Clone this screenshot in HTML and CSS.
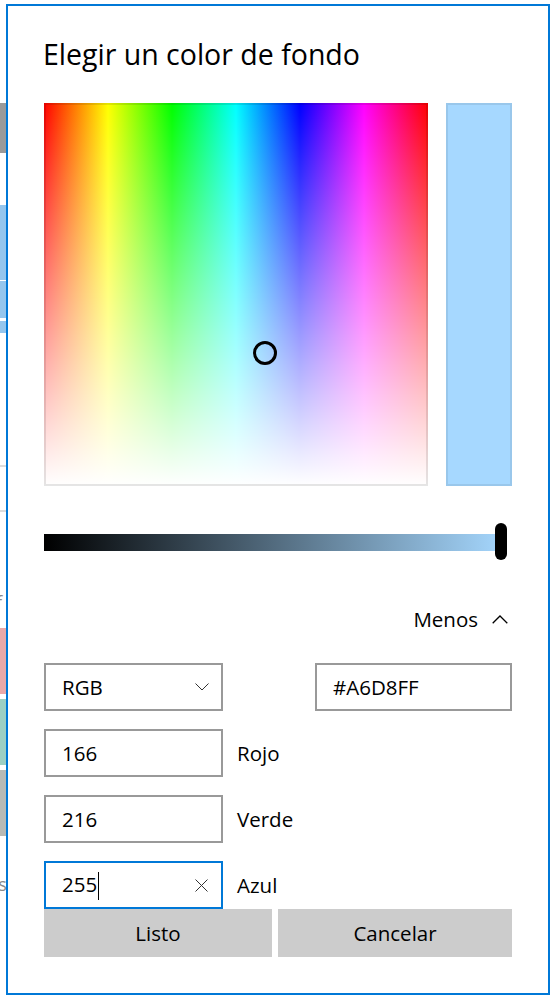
FILE: index.html
```html
<!DOCTYPE html>
<html lang="es">

<head>
  <meta charset="UTF-8" />
  <meta name="viewport" content="width=device-width, initial-scale=1.0" />
  <title>Elegir un color de fondo</title>
  <link rel="stylesheet" href="styles.css">
</head>

<body>
  <div class="screen">
    <!-- edge of the window behind the dialog -->
    <div class="behind">
      <div class="bg-block bg-gray"></div>
      <div class="bg-block bg-blue bg-blue-1"></div>
      <div class="bg-block bg-blue bg-blue-2"></div>
      <div class="bg-block bg-blue bg-blue-3"></div>
      <div class="bg-line bg-line-1"></div>
      <div class="bg-line bg-line-2"></div>
      <div class="bg-text bg-text-1">f</div>
      <div class="bg-block bg-pink"></div>
      <div class="bg-block bg-teal"></div>
      <div class="bg-block bg-stone"></div>
      <div class="bg-text bg-text-2">rs</div>
    </div>

    <div class="dialog">
      <h2 class="dialog-title">Elegir un color de fondo</h2>

      <div class="picker">
        <div class="spectrum">
          <span class="picker-ring"></span>
        </div>
        <div class="preview"></div>
      </div>

      <div class="slider">
        <div class="slider-track"></div>
        <span class="slider-thumb"></span>
      </div>

      <div class="more-row">
        <button class="toggle-btn" type="button">
          Menos
          <svg width="16" height="9" viewBox="0 0 16 9">
            <path d="M0.7 8.3 L8 1 L15.3 8.3" fill="none" stroke="#000" stroke-width="1.3" />
          </svg>
        </button>
      </div>

      <div class="fields">
        <div class="field-row split">
          <div class="box select-box">
            <span>RGB</span>
            <svg width="14" height="8" viewBox="0 0 14 8">
              <path d="M0.5 0.5 L7 7 L13.5 0.5" fill="none" stroke="#333" stroke-width="1" />
            </svg>
          </div>
          <div class="box hex-box"><span>#A6D8FF</span></div>
        </div>
        <div class="field-row">
          <div class="box"><span>166</span></div>
          <label class="field-label">Rojo</label>
        </div>
        <div class="field-row">
          <div class="box"><span>216</span></div>
          <label class="field-label">Verde</label>
        </div>
        <div class="field-row">
          <div class="box box-focus">
            <span>255<i class="caret"></i></span>
            <svg width="13" height="13" viewBox="0 0 13 13">
              <path d="M0.5 0.5 L12.5 12.5 M12.5 0.5 L0.5 12.5" fill="none" stroke="#333" stroke-width="1" />
            </svg>
          </div>
          <label class="field-label">Azul</label>
        </div>
      </div>

      <div class="actions">
        <button class="action-btn" type="button">Listo</button>
        <button class="action-btn" type="button">Cancelar</button>
      </div>
    </div>
  </div>
</body>

</html>
```

FILE: styles.css
```css
* {
  box-sizing: border-box;
}

body {
  margin: 0;
  background: #fff;
  font-family: "Segoe UI", "Open Sans", sans-serif;
  color: #000;
}

.screen {
  display: flex;
  align-items: flex-start;
  width: 558px;
  height: 1004px;
  overflow: hidden;
}

/* window behind */
.behind {
  display: flex;
  flex-direction: column;
  width: 6px;
  flex-shrink: 0;
  overflow: hidden;
}

.bg-block {
  width: 6px;
}

.bg-gray {
  margin-top: 103px;
  height: 50px;
  background: #9a9a9a;
}

.bg-blue {
  background: #94c6ee;
}

.bg-blue-1 {
  margin-top: 52px;
  height: 75px;
}

.bg-blue-2 {
  margin-top: 1px;
  height: 37px;
}

.bg-blue-3 {
  margin-top: 3px;
  height: 12px;
}

.bg-line {
  height: 2px;
  background: #dcdcdc;
}

.bg-line-1 {
  margin-top: 132px;
}

.bg-line-2 {
  margin-top: 43px;
}

.bg-text {
  height: 20px;
  font-size: 18px;
  line-height: 20px;
  color: #8a8a8a;
  white-space: nowrap;
}

.bg-text-1 {
  margin-top: 80px;
  text-indent: -4px;
}

.bg-text-2 {
  margin-top: 38px;
  text-indent: -9px;
}

.bg-pink {
  margin-top: 16px;
  height: 66px;
  background: #eaa9a9;
}

.bg-teal {
  margin-top: 5px;
  height: 66px;
  background: #9dd0c4;
}

.bg-stone {
  margin-top: 5px;
  height: 66px;
  background: #b7bab6;
}

/* dialog */
.dialog {
  margin-top: 4px;
  width: 544px;
  height: 991px;
  border: 2px solid #0078d7;
  background: #fff;
  padding: 29px 36px 0;
  display: flex;
  flex-direction: column;
}

.dialog-title {
  margin: 0 0 30px -1px;
  font-size: 28.5px;
  font-weight: 400;
  line-height: 38px;
}

.picker {
  display: flex;
  gap: 18px;
}

.spectrum {
  position: relative;
  width: 384px;
  height: 383px;
  border: 2px solid rgba(0, 0, 0, 0.1);
  background:
    linear-gradient(to bottom, rgba(255, 255, 255, 0), #fff),
    linear-gradient(to right, #f00, #ff0, #0f0, #0ff, #00f, #f0f, #f00);
  background-origin: border-box;
}

.picker-ring {
  position: absolute;
  left: 207px;
  top: 236px;
  width: 24px;
  height: 24px;
  border: 3px solid #000;
  border-radius: 50%;
}

.preview {
  width: 66px;
  height: 383px;
  background: #a6d8ff;
  border: 2px solid rgba(0, 0, 0, 0.08);
}

.slider {
  position: relative;
  margin-top: 37px;
  width: 463px;
  height: 37px;
}

.slider-track {
  margin-top: 11px;
  height: 17px;
  background: linear-gradient(to right, #000, #a6d8ff);
}

.slider-thumb {
  position: absolute;
  right: 0;
  top: 0;
  width: 12px;
  height: 37px;
  border-radius: 6px;
  background: #000;
}

.more-row {
  margin-top: 45px;
  height: 28px;
  display: flex;
  justify-content: flex-end;
}

.toggle-btn {
  display: flex;
  align-items: center;
  gap: 14px;
  padding: 0 4px 0 0;
  border: none;
  background: none;
  font: inherit;
  font-size: 20.5px;
  line-height: 28px;
  color: #000;
}

.fields {
  margin-top: 30px;
  display: flex;
  flex-direction: column;
  gap: 18px;
}

.field-row {
  display: flex;
  align-items: center;
  gap: 14px;
}

.field-row.split {
  justify-content: space-between;
}

.box {
  display: flex;
  align-items: center;
  justify-content: space-between;
  width: 179px;
  height: 48px;
  padding: 0 13px 0 16px;
  border: 2px solid #999;
  font-size: 20.5px;
}

.select-box {
  padding-right: 12px;
}

.hex-box {
  width: 197px;
}

.box-focus {
  border-color: #0078d7;
}

.caret {
  display: inline-block;
  width: 1px;
  height: 28px;
  margin-left: 1px;
  background: #000;
  vertical-align: middle;
}

.field-label {
  font-size: 20.5px;
}

.actions {
  display: grid;
  grid-template-columns: 228px 1fr;
  gap: 6px;
}

.action-btn {
  height: 48px;
  border: none;
  background: #ccc;
  font: inherit;
  font-size: 20.5px;
  color: #000;
}
```
